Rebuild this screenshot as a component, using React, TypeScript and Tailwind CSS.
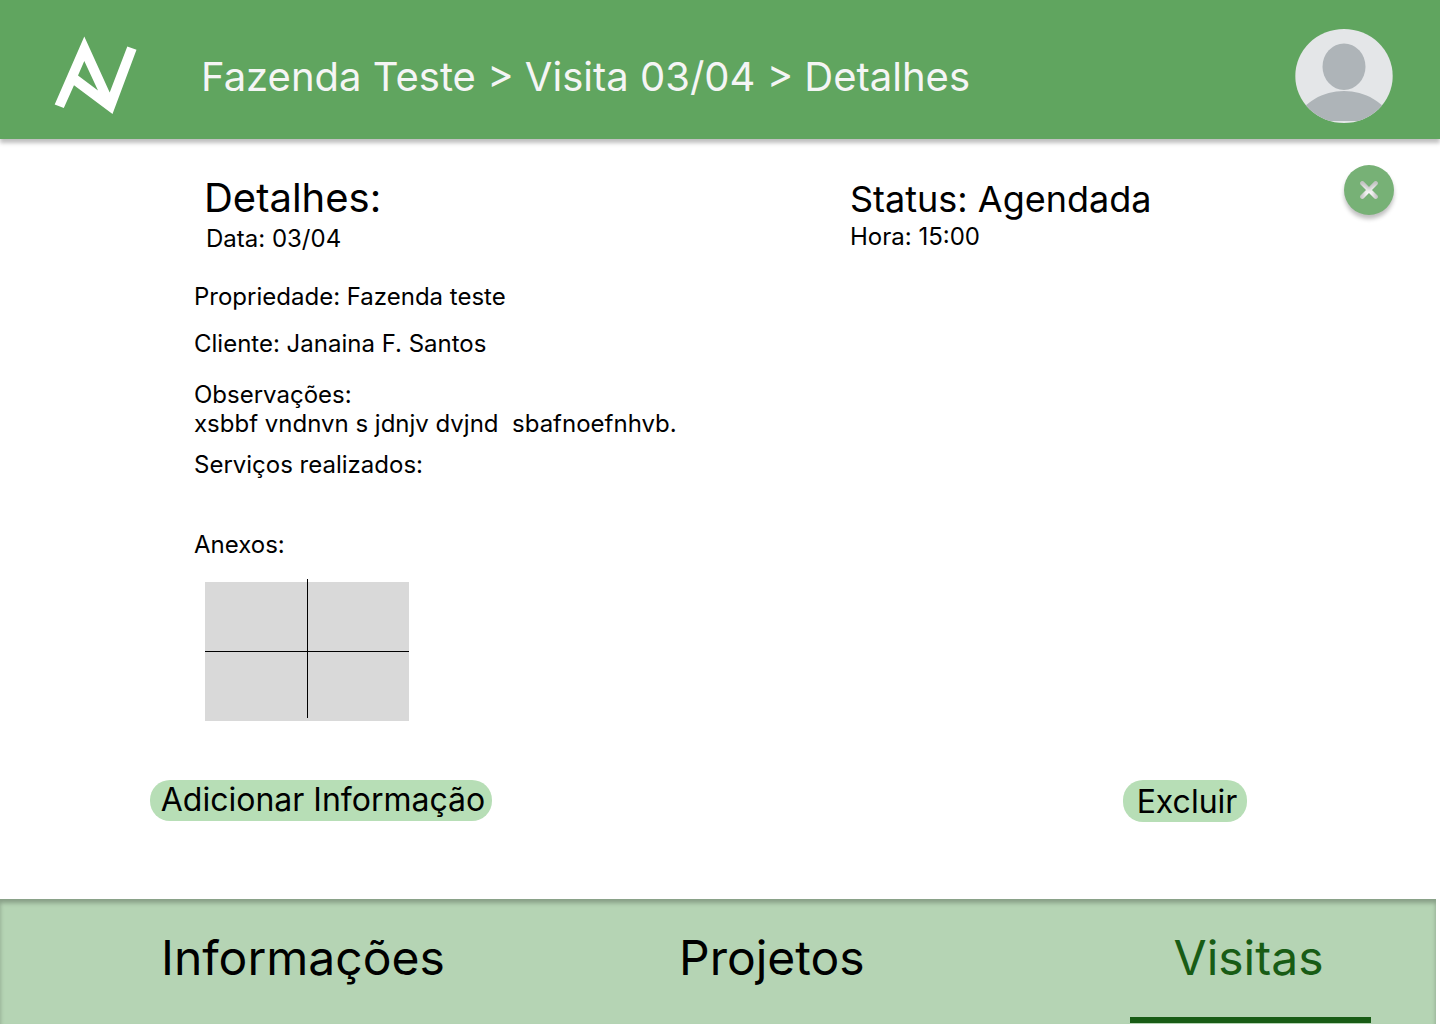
import React from "react";

const tabs = [
  { label: "Informações", active: false },
  { label: "Projetos", active: false },
  { label: "Visitas", active: true },
];

function Logo() {
  return (
    <svg viewBox="0 0 84 80" className="h-20 w-21" role="img" aria-label="Logo">
      <path
        fill="#fff"
        fillRule="evenodd"
        d="M30.3 0.5 L55.7 56.5 L73.3 10.5 L82.5 13.8 L58.5 78 L20 49.2 L9.8 72 L0.7 68.5 Z M30.3 25 L24 39.5 L44 54.5 Z"
      />
    </svg>
  );
}

function Avatar() {
  return (
    <svg viewBox="0 0 98 94" className="h-[94px] w-[98px]" aria-hidden="true">
      <defs>
        <clipPath id="avatar-clip">
          <ellipse cx="49" cy="47" rx="48.7" ry="47" />
        </clipPath>
      </defs>
      <g clipPath="url(#avatar-clip)">
        <rect width="98" height="94" fill="#e4e6e8" />
        <ellipse cx="49" cy="37.7" rx="21.5" ry="23.2" fill="#aeb4b8" />
        <path d="M0 92 C8 73 28 62 49 62 C70 62 90 73 98 92 Z" fill="#aeb4b8" />
      </g>
    </svg>
  );
}

function CloseIcon() {
  return (
    <svg viewBox="0 0 18 18" className="size-[18px]" aria-hidden="true">
      <defs>
        <filter
          id="cross-inner-shadow"
          x="0"
          y="0"
          width="18"
          height="18"
          filterUnits="userSpaceOnUse"
          colorInterpolationFilters="sRGB"
        >
          <feOffset in="SourceAlpha" dy="4" result="shifted" />
          <feGaussianBlur in="shifted" stdDeviation="2" result="soft" />
          <feComposite in="SourceAlpha" in2="soft" operator="out" result="edge" />
          <feColorMatrix in="edge" values="0 0 0 0 0  0 0 0 0 0  0 0 0 0 0  0 0 0 0.25 0" result="shade" />
          <feMerge>
            <feMergeNode in="SourceGraphic" />
            <feMergeNode in="shade" />
          </feMerge>
        </filter>
      </defs>
      <path
        d="M2.3 2.3 L15.7 15.7 M15.7 2.3 L2.3 15.7"
        stroke="#fff"
        strokeWidth="4.2"
        strokeLinecap="round"
        filter="url(#cross-inner-shadow)"
      />
    </svg>
  );
}

export default function App() {
  return (
    <div className="flex min-h-screen flex-col bg-white font-['Inter',sans-serif] text-2xl leading-[29px] text-black">
      <header className="flex h-[139px] items-center bg-[#60a55f] pr-[47px] pl-[54px] shadow-[0_4px_4px_rgba(0,0,0,0.25)]">
        <a href="#inicio" className="mt-3">
          <Logo />
        </a>
        <nav aria-label="Trilha" className="mt-3.5 ml-[63px] flex-1 text-[40px] leading-[48px] text-[#f5f5f5]">
          Fazenda Teste &gt; Visita 03/04 &gt; Detalhes
        </nav>
        <button type="button" aria-label="Perfil" className="mt-3">
          <Avatar />
        </button>
      </header>

      <main className="flex flex-1 flex-col">
        <div className="flex items-start pt-[26px] pr-[46px] pl-[194px]">
          <section className="w-[656px] pt-[9px]">
            <div className="pl-3">
              <h1 className="-ml-0.5 text-[40px] leading-[48px]">Detalhes:</h1>
              <p className="mt-0.5">Data: 03/04</p>
            </div>
            <p className="mt-[29px]">Propriedade: Fazenda teste</p>
            <p className="mt-[18px]">Cliente: Janaina F. Santos</p>
            <div className="mt-[22px]">
              <h2>Observações:</h2>
              <p className="whitespace-pre-wrap">xsbbf vndnvn s jdnjv dvjnd  sbafnoefnhvb.</p>
            </div>
            <h2 className="mt-3">Serviços realizados:</h2>
            <h2 className="mt-[51px]">Anexos:</h2>
            <svg viewBox="0 0 204 142" className="mt-5 ml-[11px] h-[142px] w-51" role="img" aria-label="Anexo">
              <rect y="3" width="204" height="139" fill="#d9d9d9" />
              <path d="M0 72.5 H204 M102.5 0 V139" stroke="#000" />
            </svg>
          </section>
          <section className="flex-1 pt-3">
            <h2 className="text-4xl leading-[44px]">Status: Agendada</h2>
            <p className="mt-px">Hora: 15:00</p>
          </section>
          <button
            type="button"
            aria-label="Fechar"
            className="flex size-[50px] items-center justify-center rounded-full bg-[#77b176] shadow-[0_4px_4px_rgba(0,0,0,0.25)]"
          >
            <CloseIcon />
          </button>
        </div>
        <div className="mt-[59px] mb-[77px] flex items-start justify-between pr-[193px] pl-[150px] text-[32px] leading-[39px]">
          <button type="button" className="h-[41px] w-[342px] rounded-[20px] bg-[#b7deb6] pb-0.5 pl-1 whitespace-nowrap">
            Adicionar Informação
          </button>
          <button type="button" className="h-[42px] w-[124px] rounded-[20px] bg-[#b7deb6] pl-1 whitespace-nowrap">
            Excluir
          </button>
        </div>
      </main>

      <nav
        aria-label="Seções"
        className="mr-1 grid h-[125px] grid-cols-[518fr_451fr_241px] bg-[#b5d4b4] pr-[65px] pl-[161px] text-5xl leading-[58px] shadow-[inset_0_4px_4px_rgba(0,0,0,0.25)]"
      >
        {tabs.map((tab) => (
          <a
            key={tab.label}
            href={"#" + tab.label.toLowerCase()}
            aria-current={tab.active ? "page" : undefined}
            className={
              tab.active
                ? "mb-px border-b-6 border-[#185c15] pt-[30px] pr-1 text-center text-[#185c15]"
                : "pt-[30px]"
            }
          >
            {tab.label}
          </a>
        ))}
      </nav>
    </div>
  );
}
